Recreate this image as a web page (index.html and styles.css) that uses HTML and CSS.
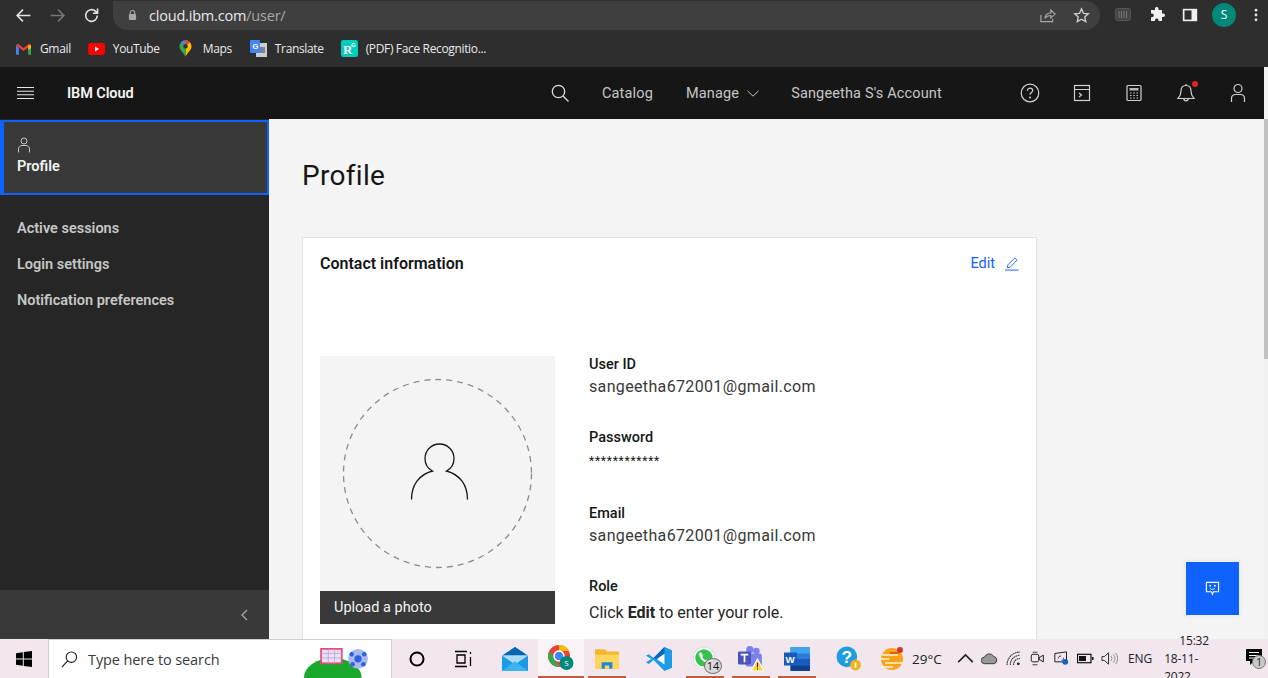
FILE: index.html
```html
<!DOCTYPE html>
<html lang="en">
<head>
<meta charset="utf-8">
<title>IBM Cloud - Profile</title>
<link rel="stylesheet" href="styles.css">
</head>
<body>
<div class="browser">
  <div class="toolbar">
    <div class="tool-nav">
      <svg class="ti" viewBox="0 0 16 16"><path d="M14.5 8H2M7.5 2.5 2 8l5.5 5.5" class="s-light"/></svg>
      <svg class="ti" viewBox="0 0 16 16"><path d="M1.5 8H14M8.5 2.5 14 8l-5.5 5.5" class="s-dim"/></svg>
      <svg class="ti" viewBox="0 0 16 16"><path d="M13.5 8a5.5 5.5 0 1 1-1.6-3.9L13.5 5.7M13.7 1.5v4.4H9.3" class="s-light"/></svg>
    </div>
    <div class="omnibox">
      <svg class="lock" viewBox="0 0 10 12"><path d="M2.5 5V3.5a2.5 2.5 0 0 1 5 0V5" fill="none" stroke="#a8a8a8" stroke-width="1.2"/><rect x="1" y="5" width="8" height="6.5" rx="1" fill="#a8a8a8"/></svg>
      <span class="url">cloud.ibm.com<span class="url-path">/user/</span></span>
      <span class="omni-actions">
        <svg class="ti" viewBox="0 0 18 18"><path d="M2 8.5v7h12.5v-3M6.2 12c.5-3.6 3.2-5.6 6.3-5.6V3.3L17 7.5l-4.500 4.200V9c-2.600 0-4.700.6-6.300 3z" fill="none" stroke="#a8a8a8" stroke-width="1.2"/></svg>
        <svg class="ti" viewBox="0 0 18 18"><path d="m9 2 2.100 4.700 5.100.5-3.800 3.400 1.100 5L9 13l-4.500 2.600 1.100-5L1.800 7.200l5.100-.5z" fill="none" stroke="#d0d0d0" stroke-width="1.400"/></svg>
      </span>
    </div>
    <div class="tool-right">
      <svg class="t-ext" viewBox="0 0 18 14"><rect x=".5" y=".5" width="15" height="12" rx="2" fill="#444" stroke="#555"/><path d="M4 3v7M6.500 3v7M9 3v7M11.500 3v7" stroke="#777"/></svg>
      <svg class="t-ext" viewBox="0 0 16 16"><path d="M6 1.500a1.800 1.800 0 0 1 3.500 0V3H13v3.500h1.200a1.800 1.800 0 0 1 0 3.600H13V14H9.500v-1.200a1.800 1.800 0 0 0-3.500 0V14H2v-3.800h1a1.800 1.800 0 0 0 0-3.600H2V3h4z" fill="#f1f1f1"/></svg>
      <svg class="t-ext" viewBox="0 0 16 16"><rect x=".8" y="1.800" width="14.400" height="12.400" fill="#f1f1f1"/><rect x="2.500" y="3.400" width="7" height="9.200" fill="#2e2e2e"/></svg>
      <span class="avatar">S</span>
      <svg class="kebab" viewBox="0 0 4 16"><circle cx="2" cy="2.500" r="1.600"/><circle cx="2" cy="8" r="1.600"/><circle cx="2" cy="13.500" r="1.600"/></svg>
    </div>
  </div>
  <div class="bookmarks">
    <span class="bm bm-gmail">
      <svg viewBox="0 0 16 12"><path d="M0 2v10h3V5z" fill="#4285f4"/><path d="M16 2v10h-3V5z" fill="#34a853"/><path d="M0 2 8 8l8-6-1.500-2L8 4.800 1.500 0z" fill="#ea4335"/><path d="M13 2h3v3l-3 2z" fill="#fbbc04"/></svg>
      Gmail
    </span>
    <span class="bm bm-yt">
      <svg viewBox="0 0 17 12"><rect width="17" height="12" rx="3" fill="#f00"/><path d="m7 3.500 4 2.500-4 2.500z" fill="#fff"/></svg>
      YouTube
    </span>
    <span class="bm bm-maps">
      <svg viewBox="0 0 14 18"><path d="M7 0a6.500 6.500 0 0 1 6.500 6.500C13.500 11 9 13 7 18z" fill="#fbbc04"/><path d="M7 0A6.500 6.500 0 0 0 .5 6.500C.5 11 5 13 7 18z" fill="#34a853"/><path d="M7 0a6.500 6.500 0 0 0-5 2.300L7 6.500z" fill="#4285f4"/><path d="M7 0a6.500 6.500 0 0 1 5 2.300L7 6.500z" fill="#ea4335"/><circle cx="7" cy="6.500" r="2.400" fill="#333"/></svg>
      Maps
    </span>
    <span class="bm bm-tr">
      <svg viewBox="0 0 17 17"><rect x="6" y="3" width="11" height="14" fill="#c9ced6"/><rect x="9" y="7" width="6" height="6" fill="#7b8494"/><rect width="10" height="13" rx="1" fill="#4285f4"/><text x="2.200" y="9" class="tr-g">G</text></svg>
      Translate
    </span>
    <span class="bm bm-rg">
      <svg viewBox="0 0 17 17"><rect width="17" height="17" rx="2" fill="#00ccbb"/><text x="2" y="14" class="rg-r">R</text><text x="10" y="7" class="rg-g">G</text></svg>
      (PDF) Face Recognitio...
    </span>
  </div>
</div>

<header class="topnav">
  <svg class="ham" viewBox="0 0 17 12"><path d="M0 .5h17M0 4.200h17M0 7.800h17M0 11.500h17" stroke="#e8e8e8" stroke-width="1.100"/></svg>
  <span class="brand">IBM Cloud</span>
  <svg class="nav-search" viewBox="0 0 18 18"><circle cx="7.500" cy="7.500" r="6.200" fill="none" stroke="#e0e0e0" stroke-width="1.300"/><path d="m12 12 5.500 5.500" stroke="#e0e0e0" stroke-width="1.300"/></svg>
  <span class="nav-link nav-catalog">Catalog</span>
  <span class="nav-link nav-manage">Manage</span>
  <svg class="chev" viewBox="0 0 12 7"><path d="m.5.800 5.500 5.400L11.500.8" fill="none" stroke="#c6c6c6"/></svg>
  <span class="nav-link nav-account">Sangeetha S's Account</span>
  <div class="nav-icons">
    <span class="nav-icon"><svg viewBox="0 0 20 20"><circle cx="10" cy="10" r="8.800" class="s-n"/><path d="M7.400 7.800c0-1.600 1.200-2.600 2.700-2.600s2.600 1 2.600 2.300c0 2.100-2.700 2-2.700 4.300" class="s-n"/><circle cx="10" cy="14.500" r="1" fill="#d0d0d0"/></svg></span>
    <span class="nav-icon"><svg viewBox="0 0 20 20"><rect x="2.500" y="2.500" width="15" height="15" class="s-n"/><path d="M2.500 6.500h15M7 10l2.500 2L7 14" class="s-n"/></svg></span>
    <span class="nav-icon"><svg viewBox="0 0 20 20"><rect x="3" y="2.500" width="14" height="15" rx="1" class="s-n"/><path d="M5.500 5h9v2.500h-9z" fill="#b8b8b8"/><path d="M6 10h1.500M9.300 10h1.500M12.500 10h1.500M6 12.500h1.500M9.300 12.500h1.500M12.500 12.500h1.500M6 15h1.500M9.300 15h1.500M12.500 15h1.500" stroke="#c8c8c8" stroke-width="1.200"/></svg></span>
    <span class="nav-icon nav-bell"><svg viewBox="0 0 20 20"><path d="M10 2.500c-3.400 0-5 2.600-5 5.500 0 3-.7 5-3 7.500h16c-2.300-2.500-3-4.500-3-7.500 0-2.900-1.600-5.500-5-5.500zM10 1v1.500M7.800 15.500c0 1.400 1 2.400 2.200 2.400s2.200-1 2.200-2.400" class="s-n"/></svg><i class="dot"></i></span>
    <span class="nav-icon"><svg viewBox="0 0 20 20"><circle cx="10" cy="5.500" r="4" class="s-n"/><path d="M3.500 19v-3.500c0-2.500 2-4 4.200-4h4.600c2.200 0 4.200 1.500 4.200 4V19" class="s-n"/></svg></span>
  </div>
</header>

<div class="workspace">
  <aside class="sidebar">
    <div class="side-active">
      <svg class="side-user" viewBox="0 0 14 16"><circle cx="7" cy="4" r="3" fill="none" stroke="#c6c6c6"/><path d="M1.500 15.500V12c0-2 1.500-3.500 3.500-3.500h4c2 0 3.500 1.500 3.500 3.500v3.500" fill="none" stroke="#c6c6c6"/></svg>
      <span class="side-title">Profile</span>
    </div>
    <nav class="side-links">
      <a>Active sessions</a>
      <a>Login settings</a>
      <a>Notification preferences</a>
    </nav>
    <div class="side-collapse">
      <svg viewBox="0 0 7 12"><path d="M6 1 1 6l5 5" fill="none" stroke="#a8a8a8" stroke-width="1.300"/></svg>
    </div>
  </aside>
  <main class="content">
    <h1 class="page-title">Profile</h1>
    <section class="card">
      <div class="card-head">
        <h2 class="card-title">Contact information</h2>
        <span class="edit">Edit
          <svg viewBox="0 0 16 16"><path d="M1 15h14.500M3.500 12.500l.6-3L10.800 2.800a1.200 1.200 0 0 1 1.700 0l.7.700a1.200 1.200 0 0 1 0 1.700L6.500 11.900z" fill="none" stroke="#0f62fe"/></svg>
        </span>
      </div>
      <div class="card-body">
        <div class="photo">
          <div class="photo-area">
            <svg class="photo-svg" viewBox="0 0 235 235">
              <circle cx="117.500" cy="117.500" r="94" class="dash"/>
              <path d="M91.500 143.500c0-15 8-25 21-28.500-4-2-7.500-6.500-7.500-12.500a14.500 14.500 0 0 1 29 0c0 6-3.500 10.500-7.500 12.500 13 3.500 21 13.500 21 28.500" class="person"/>
            </svg>
          </div>
          <div class="photo-bar">Upload a photo</div>
        </div>
        <div class="fields">
          <div class="field field-id"><div class="f-label">User ID</div><div class="f-value">sangeetha672001@gmail.com</div></div>
          <div class="field field-pw"><div class="f-label">Password</div><div class="f-stars">************</div></div>
          <div class="field field-em"><div class="f-label">Email</div><div class="f-value">sangeetha672001@gmail.com</div></div>
          <div class="field field-ro"><div class="f-label">Role</div><div class="f-role">Click <b>Edit</b> to enter your role.</div></div>
        </div>
      </div>
    </section>
    <button class="feedback" aria-label="Feedback">
      <svg viewBox="0 0 16 16"><path d="M1.500 1.500h13v10H9l-1 2.500-1-2.500H1.500z" fill="none" stroke="#fff" stroke-width="1.200"/><circle cx="5.500" cy="5" r="1" fill="#fff"/><circle cx="10.500" cy="5" r="1" fill="#fff"/><path d="M5.500 8c1.500 1.300 3.500 1.300 5 0" fill="none" stroke="#fff"/></svg>
    </button>
  </main>
  <div class="scrollbar"><div class="thumb"></div></div>
</div>

<footer class="taskbar">
  <svg class="start" viewBox="0 0 16 16"><path d="M0 2.200 6.800 1.300v6.200H0zM7.800 1.100 16 0v7.500H7.800zM0 8.500h6.800v6.200L0 13.800zM7.800 8.500H16V16l-8.200-1.100z" fill="#000"/></svg>
  <div class="searchbox">
    <svg class="sb-icon" viewBox="0 0 18 18"><circle cx="11" cy="6.500" r="5.500" fill="none" stroke="#222" stroke-width="1.200"/><path d="M7 10.500 1 17" stroke="#222" stroke-width="1.300"/></svg>
    <span class="sb-text">Type here to search</span>
    <svg class="sb-art" viewBox="0 0 80 36"><ellipse cx="32" cy="36" rx="32" ry="22" fill="#18a82c"/><rect x="19" y="4" width="23" height="16" fill="#e8e0f4" stroke="#e94a80" stroke-width="2"/><path d="M19 9h23M19 14h23M27 4v16M34 4v16" stroke="#c0a8d8"/><circle cx="60" cy="15" r="11" fill="#a8b8f0"/><circle cx="60" cy="15" r="4" fill="#2b62e0"/><circle cx="53" cy="10" r="2.500" fill="#2b62e0"/><circle cx="67" cy="10" r="2.500" fill="#2b62e0"/><circle cx="54" cy="21" r="2.500" fill="#2b62e0"/><circle cx="66" cy="21" r="2.500" fill="#2b62e0"/></svg>
  </div>
  <div class="task-apps">
    <span class="app"><svg viewBox="0 0 20 20"><circle cx="10" cy="10" r="6.500" fill="none" stroke="#000" stroke-width="2"/></svg></span>
    <span class="app"><svg viewBox="0 0 20 20"><path d="M2 2.500h12M2 17.500h12M4 6h8v8H4zM17.500 3v2" fill="none" stroke="#000" stroke-width="1.300"/><path d="M17.500 8v9" stroke="#000" stroke-width="1.300"/></svg></span>
    <span class="app app-gap"><svg class="big" viewBox="0 0 24 24"><path d="M0 9 12 1l12 8v14H0z" fill="#1a9be8"/><path d="M0 9 12 1l12 8-12 8z" fill="#0a64b4"/><path d="m0 9 12 8 12-8v-.500H0z" fill="#a8dcf8"/><path d="M0 23 12 14l12 9z" fill="#3db4f2"/></svg></span>
    <span class="app app-active"><svg class="big" viewBox="0 0 26 26"><circle cx="11" cy="11" r="11" fill="#ea4335"/><path d="M11 22A11 11 0 0 1 1.500 5.500L7 15z" fill="#34a853"/><path d="M11 0a11 11 0 0 1 10 6H11z" fill="#fbbc04"/><circle cx="11" cy="11" r="5" fill="#4285f4" stroke="#fff" stroke-width="1.500"/><circle cx="18.500" cy="18" r="7" fill="#00897b"/><text x="16.200" y="21" class="chr-s">S</text></svg></span>
    <span class="app app-open"><svg class="big" viewBox="0 0 24 22"><path d="M1 2h9l2 2h11v16H1z" fill="#f4b728"/><path d="M1 7h22v13H1z" fill="#ffd75e"/><path d="M7 20v-6h10v6h-3v-3h-4v3z" fill="#1e88d8"/></svg></span>
    <span class="app app-gap"><svg class="big" viewBox="0 0 24 24"><path d="M17 1 7 11 2.500 7.500 0 9l5 3-5 3 2.500 1.500L7 13l10 10 7-3V4z" fill="#1c9be8"/><path d="M17 7v10l-7-5z" fill="#fff"/><path d="M17 1 7 11l3 1 7-5z" fill="#0a64b4"/></svg></span>
    <span class="app app-open"><svg class="big" viewBox="0 0 24 24"><circle cx="11" cy="11" r="10" fill="#fff" stroke="#dfdfdf"/><circle cx="11" cy="11" r="8" fill="#35c34f"/><path d="M7 6c-1.500 2 1 6 3 7.500s4 2.500 5.500 1l-2-2-1.200.6c-1.200-.6-2.200-1.700-2.800-2.900l.8-1.200L8.500 6z" fill="#fff"/></svg><b class="count">14</b></span>
    <span class="app app-open"><svg class="big" viewBox="0 0 24 24"><circle cx="17" cy="4.500" r="3" fill="#7b83eb"/><circle cx="11" cy="3.500" r="3.500" fill="#7b83eb"/><rect x="7" y="7" width="15" height="12" rx="2" fill="#7b83eb"/><rect y="5" width="12" height="12" rx="1" fill="#4b53bc"/><path d="M2.500 8h7M6 8v7" stroke="#fff" stroke-width="1.600"/><path d="m18 12 6 11H12z" fill="#ffd83b" stroke="#fff"/><path d="M18 15.500v4M18 20.500v1.200" stroke="#222"/></svg></span>
    <span class="app app-open"><svg class="big" viewBox="0 0 24 24"><rect x="6" y="1" width="18" height="22" rx="1" fill="#2b7cd3"/><rect x="6" y="1" width="18" height="6" fill="#41a5ee"/><rect x="6" y="12" width="18" height="6" fill="#185abd"/><rect x="6" y="18" width="18" height="5" fill="#103f91"/><rect y="6" width="12" height="12" fill="#185abd"/><text x="1.300" y="15.500" class="wd-w">W</text></svg></span>
    <span class="app app-gap"><svg class="big" viewBox="0 0 24 24"><circle cx="10" cy="10" r="9.500" fill="#1b9de2"/><text x="5" y="16" class="q-m">?</text><circle cx="18" cy="17.500" r="5" fill="#f2b01e"/><path d="M18 15v5" stroke="#fff" stroke-width="1.500"/></svg></span>
  </div>
  <div class="tray">
    <svg class="weather" viewBox="0 0 26 26"><circle cx="13" cy="13" r="11" fill="#f9a21a"/><path d="M3 9h16M0 13h10M6 17h18M2 21h12" stroke="#fff4d8" stroke-width="1.600"/><path d="M11 7h9" stroke="#e64b00" stroke-width="1.600"/><circle cx="21" cy="4" r="3" fill="#d4342c"/></svg>
    <span class="temp">29°C</span>
    <span class="ti-slot"><svg viewBox="0 0 14 8"><path d="M1 7 7 1l6 6" fill="none" stroke="#222" stroke-width="1.300"/></svg></span>
    <span class="ti-slot"><svg viewBox="0 0 18 12"><path d="M4 11.500a3.500 3.500 0 0 1-.3-7A5.500 5.500 0 0 1 13.500 3.800 4 4 0 0 1 14 11.500z" fill="#999" stroke="#333"/></svg></span>
    <span class="ti-slot"><svg viewBox="0 0 14 14"><path d="M1 13a12 12 0 0 1 12-12M4 13a9 9 0 0 1 9-9M7 13a6 6 0 0 1 6-6" fill="none" stroke="#333" stroke-dasharray="1.500 .5"/><circle cx="11.500" cy="12" r="1.300" fill="#222"/></svg></span>
    <span class="ti-slot"><svg viewBox="0 0 18 18"><rect x="1.500" y="4" width="9" height="9" rx="2" fill="none" stroke="#222" stroke-width="1.200"/><path d="M11 8l5-3v8l-5-3z" fill="none" stroke="#222" stroke-width="1.200"/><path d="M3 1.500h6M3 16.500h6" stroke="#222"/></svg></span>
    <span class="ti-slot"><svg viewBox="0 0 18 18"><path d="M1 3 15 1v12H1z" fill="none" stroke="#222" stroke-width="1.200"/><path d="M5 9c0-2 1.500-3 3.500-3M9 11c2 0 2.500-1.500 2.500-3" fill="none" stroke="#222"/><circle cx="13.500" cy="13" r="3.500" fill="#1565c0"/></svg></span>
    <span class="ti-slot"><svg viewBox="0 0 17 10"><rect x=".5" y=".8" width="13.500" height="8.400" fill="none" stroke="#111" stroke-width="1.200"/><rect x="2" y="2.500" width="7" height="5" fill="#111"/><path d="M15 3.500h1.500v3H15z" fill="#111"/></svg></span>
    <span class="ti-slot"><svg viewBox="0 0 18 14"><path d="M1 5h2.500L8 1v12L3.500 9H1z" fill="none" stroke="#222"/><path d="M10.500 4.500a3.500 3.500 0 0 1 0 5M13 2.500a7 7 0 0 1 0 9M15.500 1a9.500 9.500 0 0 1 0 12" fill="none" stroke="#888"/></svg></span>
    <span class="lang">ENG</span>
    <span class="clock"><span>15:32</span><span>18-11-2022</span></span>
    <span class="notif"><svg viewBox="0 0 16 16"><path d="M0 0h16v12H8l-4 4v-4H0z" fill="#000"/><path d="M3 3.500h10M3 6.500h10M3 9h6" stroke="#fff"/></svg><b class="notif-n">1</b></span>
  </div>
</footer>
</body>
</html>
```
FILE: styles.css
```css
* { box-sizing: border-box; }
html, body { margin: 0; height: 678px; overflow: hidden; }
body {
  display: flex; flex-direction: column; width: 1268px;
  font-family: "Roboto", "Liberation Sans", sans-serif;
  background: #f4f4f4; color: #161616;
}
.s-light { fill: none; stroke: #e4e4e4; stroke-width: 1.500; }
.s-dim { fill: none; stroke: #757575; stroke-width: 1.500; }
.s-n { fill: none; stroke: #d0d0d0; stroke-width: 1.200; }

/* browser chrome */
.browser { height: 67px; background: #2e2e2e; flex: none; display: flex; flex-direction: column; }
.toolbar { height: 30px; display: flex; align-items: center; }
.tool-nav { display: flex; width: 113px; padding-left: 15px; gap: 17px; align-items: center; height: 29px; }
.tool-nav .ti { width: 17px; height: 17px; }
.omnibox {
  width: 987px; height: 29px; background: #3f3f3f; border-radius: 0 0 15px 15px / 0 0 15px 15px;
  border-top-left-radius: 0; display: flex; align-items: center; padding-left: 15px;
  border-radius: 0 15px 15px 15px;
}
.lock { width: 9px; height: 12px; margin-right: 12px; }
.url { color: #e8eaed; font: 14.500px "Open Sans", sans-serif; letter-spacing: -.2px; }
.url-path { color: #a8a8a8; }
.omni-actions { margin-left: auto; display: flex; gap: 17px; padding-right: 10px; }
.omni-actions .ti { width: 17px; height: 17px; }
.tool-right { display: flex; align-items: center; height: 29px; flex: 1; padding-left: 15px; }
.t-ext { width: 18px; height: 16px; margin-right: 15px; }
.avatar {
  width: 24px; height: 24px; border-radius: 50%; background: #00897b; color: #fff;
  font: 12px/24px "Open Sans", sans-serif; text-align: center; margin-left: -2px; margin-right: 18px;
}
.kebab { width: 4px; height: 14px; fill: #e8e8e8; }
.bookmarks { flex: 1; display: flex; align-items: center; padding-left: 16px; }
.bm { display: flex; align-items: center; color: #e8eaed; font: 12px "Open Sans", sans-serif; letter-spacing: -.35px; white-space: nowrap; }
.bm svg { flex: none; }
.bm-gmail svg { width: 15px; height: 12px; margin-right: 9px; }
.bm-yt { margin-left: 17px; }
.bm-yt svg { width: 17px; height: 12px; margin-right: 8px; }
.bm-maps { margin-left: 19px; }
.bm-maps svg { width: 13px; height: 17px; margin-right: 11px; }
.bm-tr { margin-left: 18px; }
.bm-tr svg { width: 17px; height: 17px; margin-right: 8px; }
.bm-rg { margin-left: 17px; }
.bm-rg svg { width: 17px; height: 17px; margin-right: 8px; }
.tr-g { font: bold 8px "Liberation Sans", sans-serif; fill: #fff; }
.rg-r { font: bold 13px "Liberation Serif", serif; fill: #fff; }
.rg-g { font: bold 6px "Liberation Sans", sans-serif; fill: #fff; }

/* IBM header */
.topnav { height: 52px; width: 1264px; background: #161616; display: flex; align-items: center; flex: none; }
.ham { width: 17px; height: 12px; margin-left: 17px; }
.brand { color: #f4f4f4; font: 600 14.500px "Roboto", sans-serif; margin-left: 33px; width: 484px; letter-spacing: -.1px; }
.nav-search { width: 18px; height: 18px; }
.nav-link { color: #c6c6c6; font: 14.500px "Roboto", sans-serif; letter-spacing: .15px; white-space: nowrap; }
.nav-catalog { margin-left: 33px; }
.nav-manage { margin-left: 33px; }
.chev { width: 12px; height: 7px; margin-left: 8px; }
.nav-account { margin-left: 32px; }
.nav-icons { margin-left: auto; display: flex; }
.nav-icon { width: 52px; height: 52px; display: flex; align-items: center; justify-content: center; position: relative; }
.nav-icon svg { width: 20px; height: 20px; }
.dot { position: absolute; width: 6px; height: 6px; border-radius: 50%; background: #e8202a; top: 14px; left: 32px; }

/* workspace */
.workspace { height: 520px; flex: none; display: flex; position: relative; overflow: hidden; }
.sidebar { width: 269px; flex: none; background: #262626; display: flex; flex-direction: column; padding-top: 1px; }
.side-active {
  height: 75px; background: #393939; border: 2px solid #0f62fe; border-left-width: 4px;
  padding: 15px 0 0 13px; display: flex; flex-direction: column; align-items: flex-start;
}
.side-user { width: 14px; height: 16px; }
.side-title { color: #f4f4f4; font: 600 14.500px/18px "Roboto", sans-serif; margin-top: 5px; }
.side-links { display: flex; flex-direction: column; padding: 16px 0 0 17px; gap: 0; }
.side-links a { height: 36px; line-height: 36px; color: #c6c6c6; font: 600 14.500px/36px "Roboto", sans-serif; }
.side-collapse { margin-top: auto; height: 49px; background: #393939; display: flex; align-items: center; justify-content: flex-end; padding-right: 21px; }
.side-collapse svg { width: 7px; height: 12px; }
.content { flex: 1; padding: 0 0 0 33px; overflow: hidden; }
.page-title { margin: 39px 0 43px; font: 400 28px/36px "Roboto", sans-serif; color: #161616; letter-spacing: .3px; }
.card { width: 735px; height: 500px; background: #fff; border: 1px solid #e0e0e0; padding: 0 17px; }
.card-head { display: flex; justify-content: space-between; align-items: center; height: 50px; }
.card-title { margin: 0; font: 600 16px "Roboto", sans-serif; color: #161616; }
.edit { display: flex; align-items: center; gap: 9px; color: #0f62fe; font: 14.500px "Roboto", sans-serif; }
.edit svg { width: 15px; height: 15px; }
.card-body { display: flex; margin-top: 68px; gap: 34px; }
.photo { width: 235px; flex: none; }
.photo-area { height: 235px; background: #f4f4f4; }
.photo-svg { display: block; width: 235px; height: 235px; }
.dash { fill: none; stroke: #8d8d8d; stroke-width: 1.300; stroke-dasharray: 6 5; }
.person { fill: none; stroke: #161616; stroke-width: 1.300; }
.photo-bar { height: 33px; background: #393939; color: #f4f4f4; font: 14.500px/33px "Roboto", sans-serif; padding-left: 14px; }
.fields { display: flex; flex-direction: column; }
.f-label { font: 500 14.500px/18px "Roboto", sans-serif; color: #161616; }
.f-value { font: 16px/24px "Roboto", sans-serif; color: #393939; margin-top: 1px; letter-spacing: .35px; }
.f-stars { font: 12px/18px "Roboto", sans-serif; color: #161616; margin-top: 5px; letter-spacing: .75px; }
.f-role { font: 16px/24px "Roboto", sans-serif; color: #262626; margin-top: 5px; }
.field-id { height: 73px; }
.field-pw { height: 76px; }
.field-em { height: 73px; }
.feedback {
  position: absolute; left: 1186px; top: 443px; width: 53px; height: 53px; border: 0; padding: 0;
  background: #0f62fe; display: flex; align-items: center; justify-content: center;
  box-shadow: 0 0 6px rgba(0,0,0,.08);
}
.feedback svg { width: 15px; height: 15px; }
.scrollbar { position: absolute; right: 0; top: -52px; bottom: 0; width: 4px; background: #f1f1f1; }
.thumb { height: 240px; margin-top: 52px; background: #c1c1c1; }

/* taskbar */
.taskbar { height: 39px; flex: none; background: #f2e6ef; display: flex; align-items: center; position: relative; }
.start { width: 16px; height: 16px; margin-left: 16px; }
.searchbox {
  width: 344px; height: 39px; margin-left: 16px; background: #fff; border: 1px solid #cfcfcf; border-bottom: 0;
  display: flex; align-items: center; padding-left: 12px; position: relative; overflow: hidden;
}
.sb-icon { width: 17px; height: 17px; }
.sb-text { margin-left: 10px; font: 14.500px "Open Sans", sans-serif; color: #3a3a3a; letter-spacing: -.1px; }
.sb-art { position: absolute; right: 15px; bottom: 0; width: 72px; height: 33px; }
.task-apps { display: flex; height: 39px; margin-left: 2px; }
.app { width: 46px; height: 39px; display: flex; align-items: center; justify-content: center; position: relative; }
.app > svg { width: 20px; height: 20px; }
.app > svg.big { width: 26px; height: 26px; }
.app-gap { margin-left: 6px; }
.app-active { background: #f9f2f7; border-bottom: 2px solid #c0603a; }
.app-open::after { content: ""; position: absolute; left: 4px; right: 4px; bottom: 0; height: 2px; background: #c0603a; }
.count {
  position: absolute; left: 22px; top: 19px; width: 18px; height: 16px; border-radius: 50%; background: #d9d9d9; border: 1px solid #777;
  font: 400 11px/14px "Open Sans", sans-serif; text-align: center; color: #111;
}
.chr-s { font: 8px "Open Sans", sans-serif; fill: #fff; }
.wd-w { font: bold 9px "Liberation Sans", sans-serif; fill: #fff; }
.q-m { font: bold 16px "Liberation Sans", sans-serif; fill: #fff; }
.tray { display: flex; align-items: center; position: absolute; left: 879px; top: 0; height: 39px; color: #222; }
.weather { width: 26px; height: 26px; }
.temp { font: 13.500px "Open Sans", sans-serif; margin-left: 7px; width: 41px; }
.ti-slot { width: 24px; height: 39px; display: flex; align-items: center; justify-content: center; }
.ti-slot svg { width: 17px; height: 15px; }
.lang { font: 12px "Open Sans", sans-serif; margin-left: 7px; letter-spacing: -.1px; }
.clock { display: flex; flex-direction: column; align-items: center; font: 12px/18px "Open Sans", sans-serif; margin-left: 12px; width: 60px; letter-spacing: -.2px; }
.notif { position: relative; margin-left: 22px; width: 24px; height: 20px; }
.notif svg { width: 16px; height: 16px; }
.notif-n {
  position: absolute; left: 6px; top: 6px; width: 14px; height: 14px; border-radius: 50%; background: #c8c8c8; border: 1px solid #777;
  font: 400 10px/12px "Open Sans", sans-serif; text-align: center;
}
```
